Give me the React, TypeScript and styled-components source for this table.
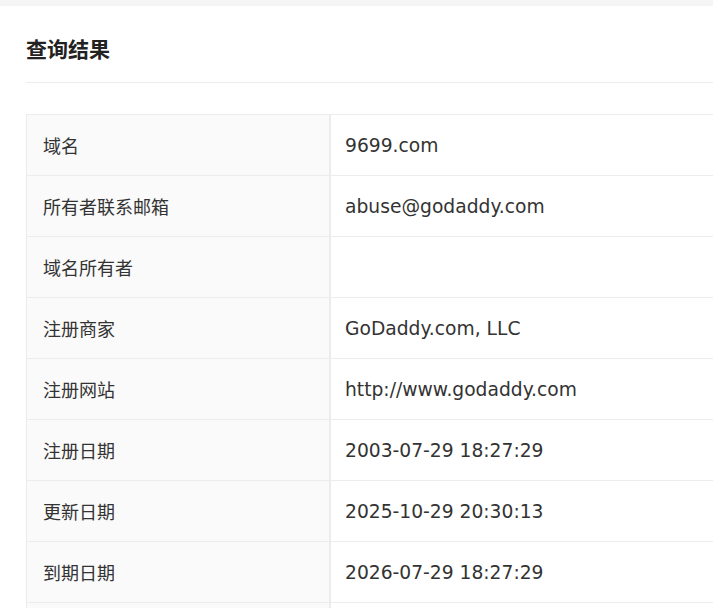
import styled, { createGlobalStyle } from 'styled-components';

const GlobalStyle = createGlobalStyle`
  html, body {
    margin: 0;
    padding: 0;
    background: #f5f5f5;
    overflow: hidden;
  }
`;

const Page = styled.div`
  padding-top: 6px;
  width: 713px;
  height: 608px;
  box-sizing: border-box;
  overflow: hidden;
`;

const Card = styled.section`
  background: #fff;
  height: 100%;
  padding-left: 26px;
`;

const Header = styled.div`
  padding: 27px 0 19px;
  border-bottom: 1px solid #ececec;
`;

const Title = styled.h2`
  margin: 0;
  font-family: 'Noto Sans CJK SC', sans-serif;
  font-size: 21px;
  line-height: 30px;
  font-weight: 700;
  color: #222;
`;

const Table = styled.div`
  margin-top: 31px;
  width: 1000px;
  border-top: 1px solid #ececec;
  border-left: 1px solid #ececec;
`;

const Row = styled.div`
  display: grid;
  grid-template-columns: 304px 1fr;
  height: 61px;
  border-bottom: 1px solid #ececec;
  box-sizing: border-box;
`;

const Label = styled.div`
  display: flex;
  align-items: center;
  padding-left: 16px;
  background: #fafafa;
  border-right: 2px solid #ececec;
  font-family: 'Noto Sans CJK SC', sans-serif;
  font-size: 18px;
  color: #333;
`;

const Value = styled.div`
  display: flex;
  align-items: center;
  padding-left: 14px;
  font-family: 'DejaVu Sans', 'Noto Sans CJK SC', sans-serif;
  font-size: 18.7px;
  color: #333;
`;

const rows: [string, string][] = [
  ['域名', '9699.com'],
  ['所有者联系邮箱', 'abuse@godaddy.com'],
  ['域名所有者', ''],
  ['注册商家', 'GoDaddy.com, LLC'],
  ['注册网站', 'http://www.godaddy.com'],
  ['注册日期', '2003-07-29 18:27:29'],
  ['更新日期', '2025-10-29 20:30:13'],
  ['到期日期', '2026-07-29 18:27:29'],
  ['', ''],
];

export default function App() {
  return (
    <Page>
      <GlobalStyle />
      <Card>
        <Header>
          <Title>查询结果</Title>
        </Header>
        <Table>
          {rows.map(([label, value], i) => (
            <Row key={i}>
              <Label>{label}</Label>
              <Value>{value}</Value>
            </Row>
          ))}
        </Table>
      </Card>
    </Page>
  );
}
